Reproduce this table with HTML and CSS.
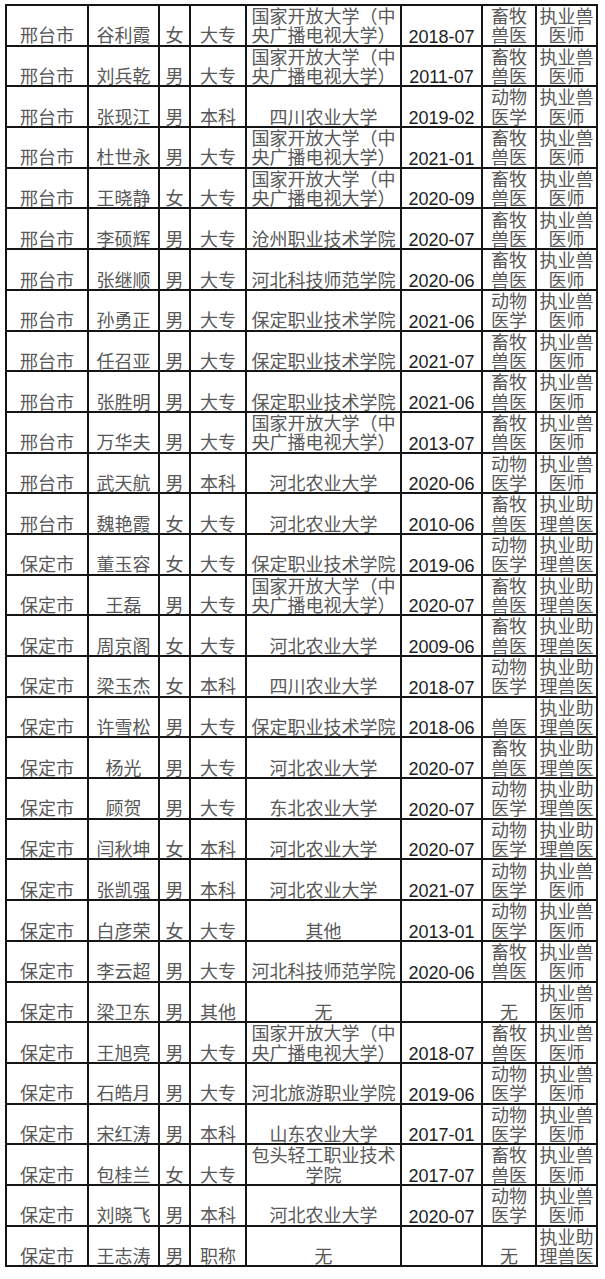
FILE: index.html
```html
<!DOCTYPE html>
<html lang="zh-CN">
<head>
<meta charset="utf-8">
<title>名单</title>
<link rel="stylesheet" href="styles.css">
</head>
<body>
<div class="sheet">
<div class="c">邢台市</div><div class="c">谷利霞</div><div class="c">女</div><div class="c">大专</div><div class="c">国家开放大学（中<br>央广播电视大学）</div><div class="c d">2018-07</div><div class="c">畜牧<br>兽医</div><div class="c">执业兽<br>医师</div>
<div class="c">邢台市</div><div class="c">刘兵乾</div><div class="c">男</div><div class="c">大专</div><div class="c">国家开放大学（中<br>央广播电视大学）</div><div class="c d">2011-07</div><div class="c">畜牧<br>兽医</div><div class="c">执业兽<br>医师</div>
<div class="c">邢台市</div><div class="c">张现江</div><div class="c">男</div><div class="c">本科</div><div class="c">四川农业大学</div><div class="c d">2019-02</div><div class="c">动物<br>医学</div><div class="c">执业兽<br>医师</div>
<div class="c">邢台市</div><div class="c">杜世永</div><div class="c">男</div><div class="c">大专</div><div class="c">国家开放大学（中<br>央广播电视大学）</div><div class="c d">2021-01</div><div class="c">畜牧<br>兽医</div><div class="c">执业兽<br>医师</div>
<div class="c">邢台市</div><div class="c">王晓静</div><div class="c">女</div><div class="c">大专</div><div class="c">国家开放大学（中<br>央广播电视大学）</div><div class="c d">2020-09</div><div class="c">畜牧<br>兽医</div><div class="c">执业兽<br>医师</div>
<div class="c">邢台市</div><div class="c">李硕辉</div><div class="c">男</div><div class="c">大专</div><div class="c">沧州职业技术学院</div><div class="c d">2020-07</div><div class="c">畜牧<br>兽医</div><div class="c">执业兽<br>医师</div>
<div class="c">邢台市</div><div class="c">张继顺</div><div class="c">男</div><div class="c">大专</div><div class="c">河北科技师范学院</div><div class="c d">2020-06</div><div class="c">畜牧<br>兽医</div><div class="c">执业兽<br>医师</div>
<div class="c">邢台市</div><div class="c">孙勇正</div><div class="c">男</div><div class="c">大专</div><div class="c">保定职业技术学院</div><div class="c d">2021-06</div><div class="c">动物<br>医学</div><div class="c">执业兽<br>医师</div>
<div class="c">邢台市</div><div class="c">任召亚</div><div class="c">男</div><div class="c">大专</div><div class="c">保定职业技术学院</div><div class="c d">2021-07</div><div class="c">畜牧<br>兽医</div><div class="c">执业兽<br>医师</div>
<div class="c">邢台市</div><div class="c">张胜明</div><div class="c">男</div><div class="c">大专</div><div class="c">保定职业技术学院</div><div class="c d">2021-06</div><div class="c">畜牧<br>兽医</div><div class="c">执业兽<br>医师</div>
<div class="c">邢台市</div><div class="c">万华夫</div><div class="c">男</div><div class="c">大专</div><div class="c">国家开放大学（中<br>央广播电视大学）</div><div class="c d">2013-07</div><div class="c">畜牧<br>兽医</div><div class="c">执业兽<br>医师</div>
<div class="c">邢台市</div><div class="c">武天航</div><div class="c">男</div><div class="c">本科</div><div class="c">河北农业大学</div><div class="c d">2020-06</div><div class="c">动物<br>医学</div><div class="c">执业兽<br>医师</div>
<div class="c">邢台市</div><div class="c">魏艳霞</div><div class="c">女</div><div class="c">大专</div><div class="c">河北农业大学</div><div class="c d">2010-06</div><div class="c">畜牧<br>兽医</div><div class="c">执业助<br>理兽医</div>
<div class="c">保定市</div><div class="c">董玉容</div><div class="c">女</div><div class="c">大专</div><div class="c">保定职业技术学院</div><div class="c d">2019-06</div><div class="c">动物<br>医学</div><div class="c">执业助<br>理兽医</div>
<div class="c">保定市</div><div class="c">王磊</div><div class="c">男</div><div class="c">大专</div><div class="c">国家开放大学（中<br>央广播电视大学）</div><div class="c d">2020-07</div><div class="c">畜牧<br>兽医</div><div class="c">执业助<br>理兽医</div>
<div class="c">保定市</div><div class="c">周京阁</div><div class="c">女</div><div class="c">大专</div><div class="c">河北农业大学</div><div class="c d">2009-06</div><div class="c">畜牧<br>兽医</div><div class="c">执业助<br>理兽医</div>
<div class="c">保定市</div><div class="c">梁玉杰</div><div class="c">女</div><div class="c">本科</div><div class="c">四川农业大学</div><div class="c d">2018-07</div><div class="c">动物<br>医学</div><div class="c">执业助<br>理兽医</div>
<div class="c">保定市</div><div class="c">许雪松</div><div class="c">男</div><div class="c">大专</div><div class="c">保定职业技术学院</div><div class="c d">2018-06</div><div class="c">兽医</div><div class="c">执业助<br>理兽医</div>
<div class="c">保定市</div><div class="c">杨光</div><div class="c">男</div><div class="c">大专</div><div class="c">河北农业大学</div><div class="c d">2020-07</div><div class="c">畜牧<br>兽医</div><div class="c">执业助<br>理兽医</div>
<div class="c">保定市</div><div class="c">顾贺</div><div class="c">男</div><div class="c">大专</div><div class="c">东北农业大学</div><div class="c d">2020-07</div><div class="c">动物<br>医学</div><div class="c">执业助<br>理兽医</div>
<div class="c">保定市</div><div class="c">闫秋坤</div><div class="c">女</div><div class="c">本科</div><div class="c">河北农业大学</div><div class="c d">2020-07</div><div class="c">动物<br>医学</div><div class="c">执业助<br>理兽医</div>
<div class="c">保定市</div><div class="c">张凯强</div><div class="c">男</div><div class="c">本科</div><div class="c">河北农业大学</div><div class="c d">2021-07</div><div class="c">动物<br>医学</div><div class="c">执业兽<br>医师</div>
<div class="c">保定市</div><div class="c">白彦荣</div><div class="c">女</div><div class="c">大专</div><div class="c">其他</div><div class="c d">2013-01</div><div class="c">动物<br>医学</div><div class="c">执业兽<br>医师</div>
<div class="c">保定市</div><div class="c">李云超</div><div class="c">男</div><div class="c">大专</div><div class="c">河北科技师范学院</div><div class="c d">2020-06</div><div class="c">畜牧<br>兽医</div><div class="c">执业兽<br>医师</div>
<div class="c">保定市</div><div class="c">梁卫东</div><div class="c">男</div><div class="c">其他</div><div class="c">无</div><div class="c d"></div><div class="c">无</div><div class="c">执业兽<br>医师</div>
<div class="c">保定市</div><div class="c">王旭亮</div><div class="c">男</div><div class="c">大专</div><div class="c">国家开放大学（中<br>央广播电视大学）</div><div class="c d">2018-07</div><div class="c">畜牧<br>兽医</div><div class="c">执业兽<br>医师</div>
<div class="c">保定市</div><div class="c">石皓月</div><div class="c">男</div><div class="c">大专</div><div class="c">河北旅游职业学院</div><div class="c d">2019-06</div><div class="c">动物<br>医学</div><div class="c">执业兽<br>医师</div>
<div class="c">保定市</div><div class="c">宋红涛</div><div class="c">男</div><div class="c">本科</div><div class="c">山东农业大学</div><div class="c d">2017-01</div><div class="c">动物<br>医学</div><div class="c">执业兽<br>医师</div>
<div class="c">保定市</div><div class="c">包桂兰</div><div class="c">女</div><div class="c">大专</div><div class="c">包头轻工职业技术<br>学院</div><div class="c d">2017-07</div><div class="c">畜牧<br>兽医</div><div class="c">执业兽<br>医师</div>
<div class="c">保定市</div><div class="c">刘晓飞</div><div class="c">男</div><div class="c">本科</div><div class="c">河北农业大学</div><div class="c d">2020-07</div><div class="c">动物<br>医学</div><div class="c">执业兽<br>医师</div>
<div class="c">保定市</div><div class="c">王志涛</div><div class="c">男</div><div class="c">职称</div><div class="c">无</div><div class="c d"></div><div class="c">无</div><div class="c">执业助<br>理兽医</div>
</div>
</body>
</html>
```

FILE: styles.css
```css
html, body {
  margin: 0;
  padding: 0;
  background: #ffffff;
}

body {
  padding: 4px 0 0 5px;
}

.sheet {
  display: inline-grid;
  grid-template-columns: 80px 69px 29px 54px 153px 79px 52px 59px;
  grid-auto-rows: 38.7px;
  gap: 2px;
  padding: 2px;
  background: #151515;
}

.c {
  background: #ffffff;
  display: flex;
  align-items: flex-end;
  justify-content: center;
  text-align: center;
  font-family: "Noto Sans CJK SC", "Noto Sans", sans-serif;
  font-size: 18px;
  line-height: 19.3px;
  color: #585858;
  white-space: nowrap;
}

.d {
  font-family: "Liberation Sans", Arial, sans-serif;
  color: #1e1e1e;
  line-height: 16px;
}
```
